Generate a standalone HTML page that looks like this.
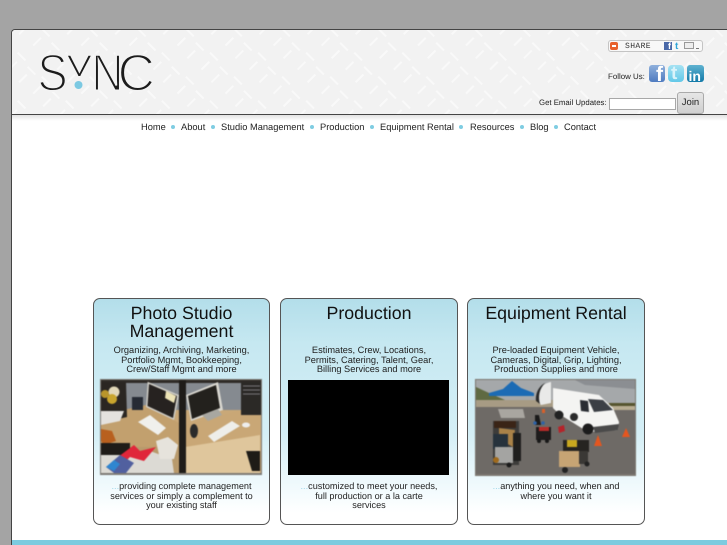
<!DOCTYPE html>
<html><head><meta charset="utf-8"><style>
html,body{margin:0;padding:0;width:727px;height:545px;overflow:hidden;background:#a4a4a4;font-family:"Liberation Sans",Arial,sans-serif;color:#222;text-rendering:geometricPrecision}
div,span,svg{position:absolute}
.t{white-space:nowrap}
#panel{left:11px;top:29px;width:716px;height:516px;background:#fff;border-left:1px solid #444;border-top:1px solid #444;border-radius:4px 0 0 0;overflow:hidden;box-sizing:border-box}
#head{left:12px;top:30px;width:715px;height:84px;border-radius:3px 0 0 0;overflow:hidden}
#line{left:12px;top:114px;width:715px;height:1px;background:#444}
#sh{left:12px;top:115px;width:715px;height:6px;background:linear-gradient(#e2e2e2,#fff)}
.nav{top:121px;font-size:9.3px;line-height:12px;color:#222;filter:blur(.25px)}
.dot{top:125px;width:4px;height:4px;border-radius:50%;background:#7fcde2}
.card{top:298px;height:227px;box-sizing:border-box;border:1px solid #555;border-radius:7px;background:linear-gradient(#b3deea 0,#c6e8f1 20%,#d5eff6 60%,#f6fcfe 88%,#fff 95%)}
.h{font-size:17.8px;line-height:18px;text-align:center;color:#111;left:0;width:100%;top:5px;filter:blur(.25px)}
.s{font-size:9.25px;line-height:9.7px;text-align:center;color:#222;left:0;width:100%;top:47px;filter:blur(.25px)}
.b{font-size:9.15px;line-height:9.7px;text-align:center;color:#222;left:0;width:100%;top:183px;filter:blur(.25px)}
.b i{font-style:normal;color:#9bd6e8}
</style></head><body>
<div id="panel"></div>
<svg id="head" width="715" height="84" viewBox="0 0 715 84">
<defs><pattern id="p" width="34" height="34" patternUnits="userSpaceOnUse" patternTransform="rotate(-45)">
<rect width="34" height="34" fill="#f2f2f2"/>
<path d="M2 8h11M19 3v11M4 26h11M22 20v11" stroke="#f9f9f9" stroke-width="2"/></pattern></defs>
<rect width="715" height="84" fill="url(#p)"/>
</svg>
<div id="line"></div><div id="sh"></div>

<svg style="left:30px;top:45px" width="130" height="55" viewBox="0 0 130 55">
<defs><clipPath id="yc"><rect x="0" y="0" width="130" height="31"/></clipPath></defs>
<g font-family="'Liberation Sans',sans-serif" font-size="52" fill="#1c1c1c" stroke="#f3f3f3" stroke-width="2" paint-order="fill stroke">
<text transform="translate(7.500,45.300) scale(.87,1)">S</text>
<g clip-path="url(#yc)"><text transform="translate(35.500,45.300) scale(.8,1)">Y</text></g>
<text transform="translate(61.500,45.300) scale(.85,1)">N</text>
<text transform="translate(87.500,45.300)">C</text>
</g>
<circle cx="48.500" cy="40" r="4" fill="#7cc9e2"/>
</svg>

<!-- share -->
<div style="left:608px;top:40px;width:93px;height:10px;border:1px solid #c4c4c4;border-radius:3px;background:#f8f8f8"></div>
<div style="left:610px;top:42px;width:8px;height:8px;background:#e8612c;border-radius:2px"></div>
<div style="left:612px;top:45px;width:4px;height:2px;background:#fff"></div>
<div class="t" style="left:625px;top:41.500px;font:8px/10px 'Liberation Mono',monospace;letter-spacing:.4px;color:#333">SHARE</div>
<div style="left:664px;top:42px;width:8px;height:8px;background:#4a69a8;color:#fff;font:bold 9px/9px 'Liberation Sans';overflow:hidden"><span class="t" style="right:1px;top:0">f</span></div>
<div class="t" style="left:675px;top:41px;color:#2ea5d8;font:bold 10px/11px 'Liberation Sans'">t</div>
<div style="left:684px;top:42px;width:8px;height:5px;border:1px solid #999;background:#eee"></div>
<div style="left:696px;top:48px;width:3px;height:1px;background:#777"></div>

<div class="t" style="left:608px;top:71px;font-size:7.900px;line-height:12px;color:#222;filter:blur(.2px)">Follow Us:</div>
<div style="left:649px;top:65px;width:16px;height:17px;border-radius:3px;background:linear-gradient(#8fb0dc,#4f7bc0);color:#fff;font:bold 21px/22px 'Liberation Sans';overflow:hidden"><span class="t" style="right:2px;top:-1px">f</span></div>
<div style="left:668px;top:65px;width:16px;height:17px;border-radius:4px;background:linear-gradient(#a5e2f3,#62c8e8);color:#d9f3fa;font:bold 19px/19px 'Liberation Sans';overflow:hidden"><span class="t" style="left:3px;top:-1px">t</span></div>
<div style="left:687px;top:65px;width:17px;height:17px;border-radius:3px;background:linear-gradient(#5fb2d0,#1279a8);color:#fff;font:bold 14px/23px 'Liberation Sans';overflow:hidden"><span class="t" style="left:1.500px;top:0">in</span></div>

<div class="t" style="left:539px;top:97px;font-size:7.800px;line-height:12px;color:#222;filter:blur(.2px)">Get Email Updates:</div>
<div style="left:609px;top:98px;width:65px;height:10px;border:1px solid #a8a8a8;background:#fff"></div>
<div style="left:677px;top:92px;width:25px;height:20px;border:1px solid #aaa;border-radius:3px;background:linear-gradient(#e6e6e6,#cfcfcf);font-size:9.500px;line-height:20px;text-align:center;color:#222">Join</div>

<!-- nav -->
<div class="nav t" style="left:141px">Home</div><div class="dot" style="left:171px"></div>
<div class="nav t" style="left:181px">About</div><div class="dot" style="left:211px"></div>
<div class="nav t" style="left:221px">Studio Management</div><div class="dot" style="left:310px"></div>
<div class="nav t" style="left:320px">Production</div><div class="dot" style="left:370px"></div>
<div class="nav t" style="left:380px">Equipment Rental</div><div class="dot" style="left:459px"></div>
<div class="nav t" style="left:470px">Resources</div><div class="dot" style="left:520px"></div>
<div class="nav t" style="left:530px">Blog</div><div class="dot" style="left:554px"></div>
<div class="nav t" style="left:564px">Contact</div>

<!-- cards -->
<div class="card" style="left:93px;width:177px">
<div class="h">Photo Studio<br>Management</div>
<div class="s">Organizing, Archiving, Marketing,<br>Portfolio Mgmt, Bookkeeping,<br>Crew/Staff Mgmt and more</div>
<div class="b"><i>...</i>providing complete management<br>services or simply a complement to<br>your existing staff</div>
</div>
<div class="card" style="left:280px;width:178px">
<div class="h">Production</div>
<div class="s">Estimates, Crew, Locations,<br>Permits, Catering, Talent, Gear,<br>Billing Services and more</div>
<div class="b"><i>...</i>customized to meet your needs,<br>full production or a la carte<br>services</div>
</div>
<div class="card" style="left:467px;width:178px">
<div class="h">Equipment Rental</div>
<div class="s">Pre-loaded Equipment Vehicle,<br>Cameras, Digital, Grip, Lighting,<br>Production Supplies and more</div>
<div class="b"><i>...</i>anything you need, when and<br>where you want it</div>
</div>

<!-- photo 1 -->
<svg style="left:100px;top:379px;filter:blur(.6px)" width="162" height="96" viewBox="0 0 162 96">
<rect width="162" height="96" fill="#7d7a75"/>
<rect x="1" y="1" width="160" height="93" fill="#c9a878"/>
<rect x="1" y="1" width="160" height="30" fill="#858a90"/>
<rect x="1" y="1" width="160" height="3" fill="#2f2b27"/>
<path d="M1 36 46 26 79 44V94H1Z" fill="#c2a06e"/>
<path d="M85 46 160 26V94H85Z" fill="#c9a776"/>
<path d="M85 68 160 56V94H85Z" fill="#dfc69c"/>
<rect x="79" y="1" width="7" height="93" fill="#1f1c19"/>
<path d="M1 3H26L27 38 1 44Z" fill="#2a2622"/>
<circle cx="14" cy="13" r="5.500" fill="#e2d8b8"/><circle cx="12" cy="20" r="5" fill="#c9a52d"/><circle cx="5" cy="15" r="4" fill="#b8952b"/>
<rect x="32" y="18" width="11" height="13" fill="#262b34"/>
<path d="M47.600 2.700 79 16 74 41 46 28Z" fill="#cfcdc6"/><path d="M49 5 77 17 73 39 47.500 27Z" fill="#262220"/>
<path d="M66 12 76 17 74 24 65 19Z" fill="#ece3b6"/>
<path d="M38 43 50 36 66 49 58 56Z" fill="#f0f0ec"/>
<path d="M1 32H24L20 42 1 46Z" fill="#e4e2de"/>
<path d="M1 50 12 52 16 62 4 66 1 62Z" fill="#b8601f"/>
<path d="M1 68H78V94H1Z" fill="#b89a6c"/>
<path d="M1 64H30V76H1Z" fill="#1f1c18"/>
<path d="M1 76H30L50 72 72 80 74 94H1Z" fill="#dcdad4"/>
<path d="M18 78 34 66 40 72 56 68 44 82 30 78 26 82Z" fill="#e0263a"/>
<path d="M6 88 20 76 34 84 26 94H14Z" fill="#51609f"/>
<path d="M6 88 14 81 20 85 14 92Z" fill="#2f86d0"/>
<path d="M56 62 68 58 78 66 74 80 60 80Z" fill="#e6e3dc"/>
<path d="M86 16 118 3 123 31 91 42Z" fill="#d9d7d0"/><path d="M88 17 116 6 120 29 92 40Z" fill="#23211d"/>
<path d="M102 36 118 30 122 36 108 42Z" fill="#a8a7a1"/>
<path d="M141 3H161V36H141Z" fill="#2b2926"/><path d="M143 7H160M143 11H160M143 15H160" stroke="#77757a"/>
<path d="M108 57 132 42 140 47 114 63Z" fill="#eeeeea"/>
<ellipse cx="94" cy="52" rx="4" ry="7" fill="#2a2a2a"/>
<ellipse cx="146" cy="46" rx="4" ry="2.500" fill="#eee"/>
<path d="M146 72H160V92H152Z" fill="#1e1b16"/>
</svg>

<!-- photo 2 -->
<div style="left:288px;top:380px;width:161px;height:95px;background:#000"></div>

<!-- photo 3 -->
<svg style="left:475px;top:379px;filter:blur(.6px)" width="161" height="97" viewBox="0 0 161 97">
<rect width="161" height="97" fill="#7c7770"/>
<rect x="1" y="1" width="159" height="94" fill="#6e6a66"/>
<rect x="1" y="1" width="159" height="24" fill="#a5a8aa"/>
<path d="M100 1H160V10L110 6Z" fill="#8b8e92"/>
<path d="M1 8 14 14 30 21H1Z" fill="#5f6a42"/>
<path d="M1 21H80V28H1Z" fill="#a79b84"/>
<path d="M130 24H160V31H130Z" fill="#b8ad92"/>
<path d="M134 24H160V27H134Z" fill="#56552f"/>
<path d="M14 14 28 10 37 2 46 9 59 14 59 17H14Z" fill="#1c6bb4"/>
<path d="M23 30H48L50 39H26Z" fill="#a9a6a0"/>
<path d="M61 20C60 12 68 4 76 3V24L66 26Z" fill="#e9e9e8"/>
<path d="M61 22C60 12 66 6 70 4 64 10 63 18 65 25Z" fill="#2a2a2a"/>
<path d="M78 9 124 16 138 29 144 43 143 51 113 53 84 35 78 29Z" fill="#f4f4f2"/>
<path d="M113 20 128 21 138 31 119 33Z" fill="#3b3f45"/>
<path d="M105 21 113 22 114 33 106 32Z" fill="#2a2d33"/>
<path d="M118 48 144 45 143 51 120 54Z" fill="#4a4a4a"/>
<circle cx="113" cy="50" r="5.500" fill="#1c1c1c"/><circle cx="84" cy="36" r="4.500" fill="#222"/>
<circle cx="99" cy="38" r="4" fill="#2a2a2a"/>
<path d="M60 36 64 36 66 46 60 46Z" fill="#1a1a1a"/>
<circle cx="60" cy="44" r="1.800" fill="#2d62a8"/><circle cx="68" cy="44" r="1.800" fill="#2d62a8"/>
<rect x="18" y="42" width="26" height="44" fill="#3d3c3a"/>
<rect x="19" y="42" width="22" height="7" fill="#3a2416"/>
<path d="M24 49 40 51 38 68 24 60Z" fill="#a98248"/>
<rect x="18" y="55" width="15" height="15" fill="#26323c"/>
<rect x="20" y="68" width="18" height="16" fill="#a4a4a2"/>
<rect x="38" y="54" width="8" height="28" fill="#1f1f1e"/>
<circle cx="21" cy="81" r="3" fill="#a06a1c"/><circle cx="34" cy="86" r="2.500" fill="#1a1a1a"/>
<rect x="61" y="48" width="15" height="13" fill="#1e1c1c"/><rect x="64" y="48" width="10" height="4" fill="#b82a28"/>
<circle cx="64" cy="62" r="2" fill="#181818"/><circle cx="72" cy="62" r="2" fill="#181818"/>
<path d="M83 48 89 46 90 52 84 54Z" fill="#b5242a"/>
<rect x="88" y="61" width="26" height="12" fill="#262421"/>
<rect x="92" y="61" width="10" height="7" fill="#c9a81f"/>
<rect x="84" y="72" width="21" height="16" fill="#c6a474"/>
<rect x="104" y="72" width="9" height="13" fill="#3a3835"/>
<circle cx="90" cy="91" r="3" fill="#222"/><circle cx="112" cy="85" r="2.500" fill="#222"/>
<path d="M119 67 123 56 127 67Z" fill="#e4561f"/>
<path d="M147 58 151 49 155 58Z" fill="#e4561f"/>
<path d="M67 30 70 30 70 34 67 34Z" fill="#d8602a"/>
</svg>

<div style="left:12px;top:540px;width:715px;height:5px;background:#7ccbdf"></div>
</body></html>
